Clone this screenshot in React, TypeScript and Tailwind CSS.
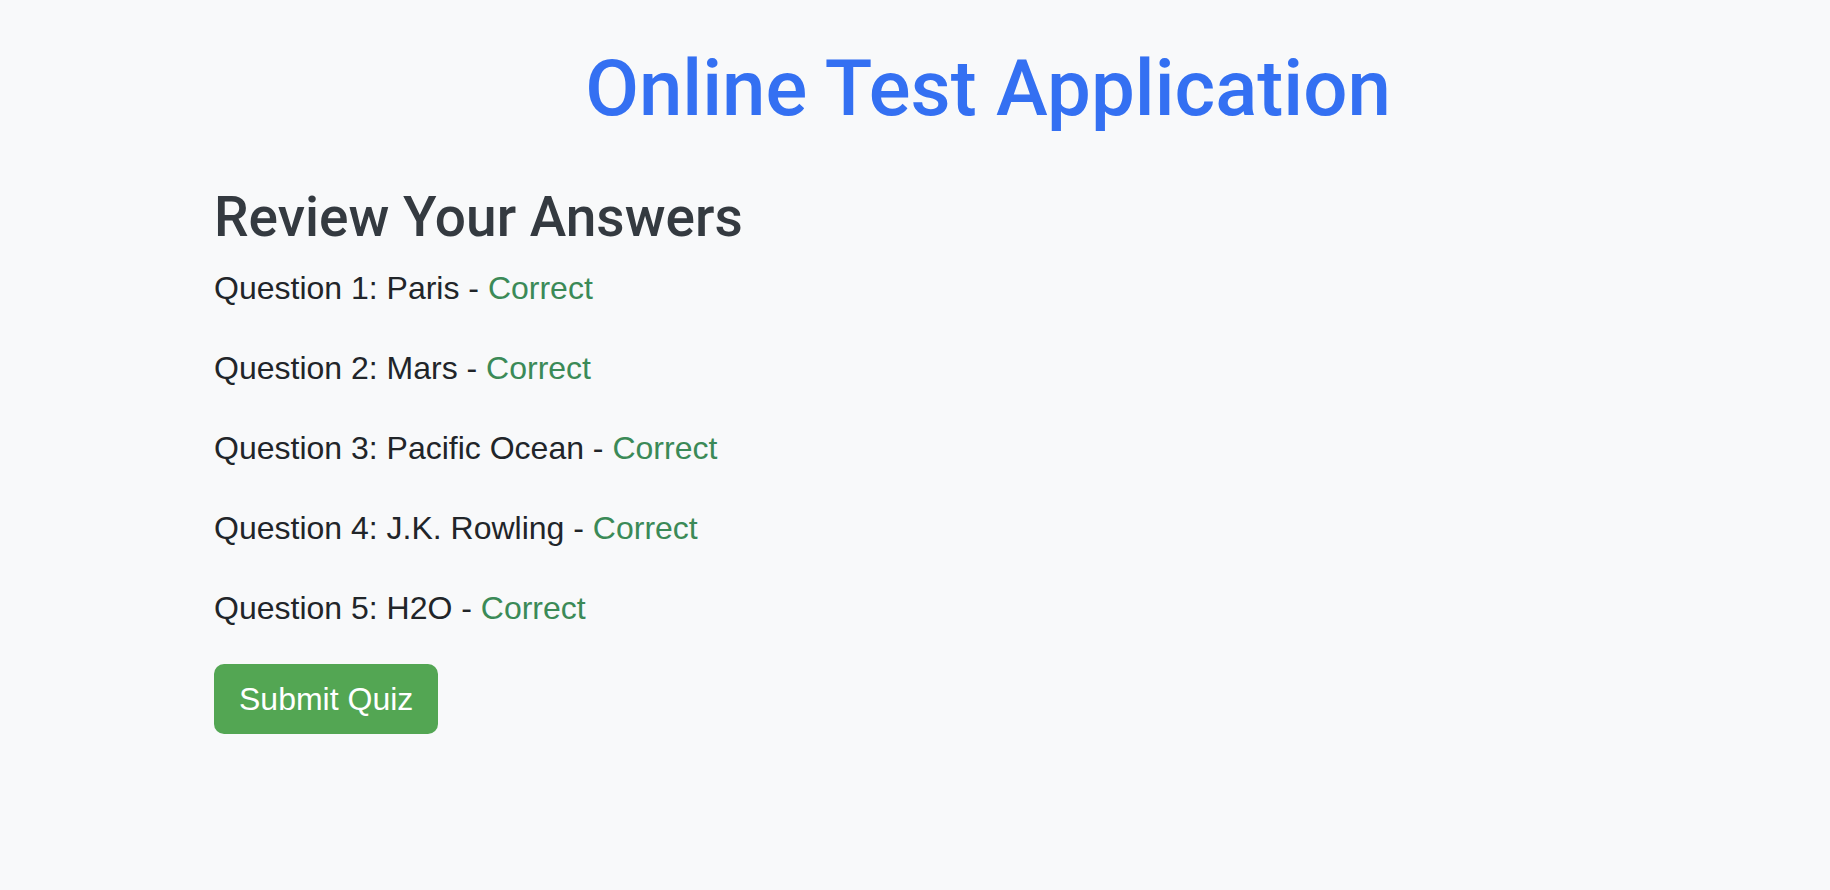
const answers = [
  { id: 1, answer: 'Paris', correct: true },
  { id: 2, answer: 'Mars', correct: true },
  { id: 3, answer: 'Pacific Ocean', correct: true },
  { id: 4, answer: 'J.K. Rowling', correct: true },
  { id: 5, answer: 'H2O', correct: true },
];

export default function App() {
  return (
    <div className="min-h-screen bg-[#f8f9fa] font-['Liberation_Sans',Arial,sans-serif] text-[32px] leading-[1.5] text-[#212529]">
      <div className="pl-[214px] pr-[68px] pt-[42px]">
        {/* Title */}
        <h1 className="mb-[48px] text-center font-['Roboto',sans-serif] text-[78px] font-medium leading-[1.2] text-[#3470f2]">
          Online Test Application
        </h1>

        {/* Review */}
        <h3 className="mb-[14px] font-['Roboto',sans-serif] text-[55px] font-medium leading-[1.2] text-[#343a40]">
          Review Your Answers
        </h3>
        {answers.map((q) => (
          <p key={q.id} className="mb-[32px]">
            Question {q.id}: {q.answer} -{' '}
            <span className={q.correct ? 'text-[#3b8a57]' : 'text-[#dc3545]'}>
              {q.correct ? 'Correct' : 'Incorrect'}
            </span>
          </p>
        ))}
        <button className="rounded-[10px] bg-[#53a653] px-[25px] py-[11px] leading-[1.5] text-white">
          Submit Quiz
        </button>
      </div>
    </div>
  );
}
